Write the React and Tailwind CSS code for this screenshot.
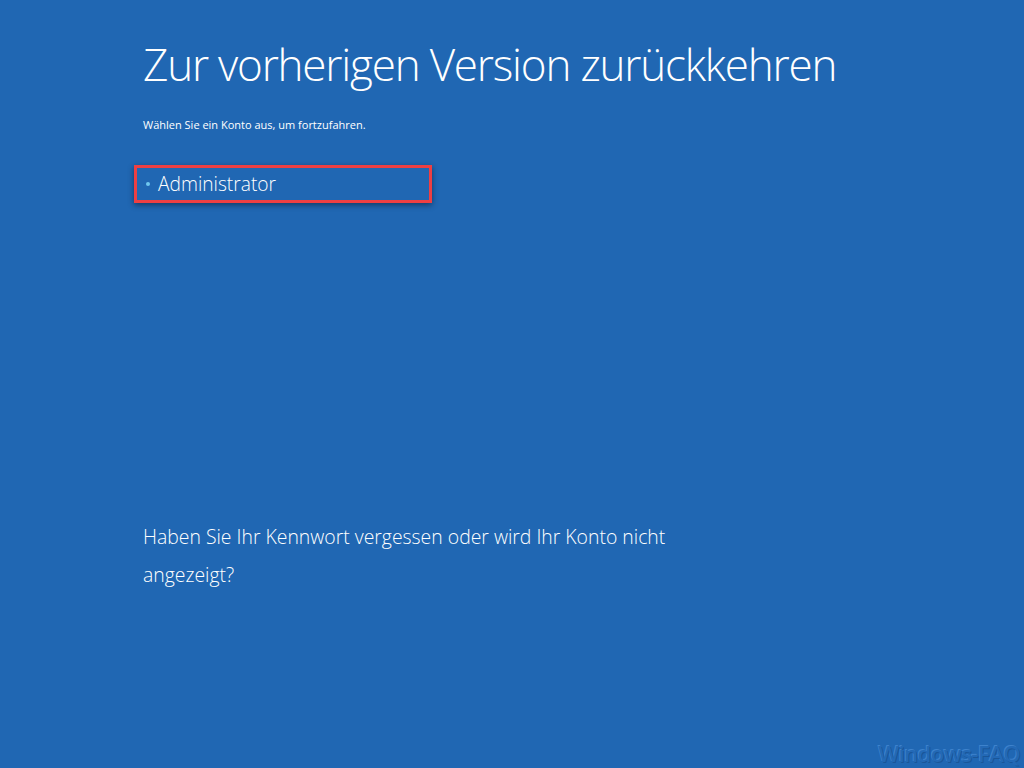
export default function App() {
  return (
    <div
      className="w-[1024px] h-[768px] bg-[#2067b3] text-white relative overflow-hidden"
      style={{ fontFamily: '"Open Sans", "Liberation Sans", sans-serif' }}
    >
      <div className="pl-[143px] pt-[36px] flex flex-col">
        <h1 className="text-[44px] font-light leading-[56px] tracking-[-1.2px]">
          Zur vorherigen Version zurückkehren
        </h1>
        <p className="text-[11px] mt-[26px] leading-[14px]">
          Wählen Sie ein Konto aus, um fortzufahren.
        </p>

        <div className="mt-[33px] -ml-[9px] w-[298px] h-[38px] border-[3px] border-[#ee3f43] shadow-[0_2px_6px_rgba(0,0,0,0.45)] flex items-center pl-[9px]">
          <span className="w-[4px] h-[4px] rounded-full bg-[#6fc8f0] mr-[8px]" />
          <span className="text-[19.2px] font-light leading-[24px]">Administrator</span>
        </div>

        <p className="mt-[315px] w-[560px] text-[19.4px] font-light leading-[38px]">
          Haben Sie Ihr Kennwort vergessen oder wird Ihr Konto nicht angezeigt?
        </p>
      </div>

      <div
        className="absolute right-[4px] bottom-[3px] text-[22px] font-semibold text-[#2369b6] tracking-[-0.5px] leading-[24px]"
        style={{ textShadow: "1px 1px 0 #1a5699, -1px -1px 0 #3d82cc" }}
      >
        Windows-FAQ
      </div>
    </div>
  );
}
